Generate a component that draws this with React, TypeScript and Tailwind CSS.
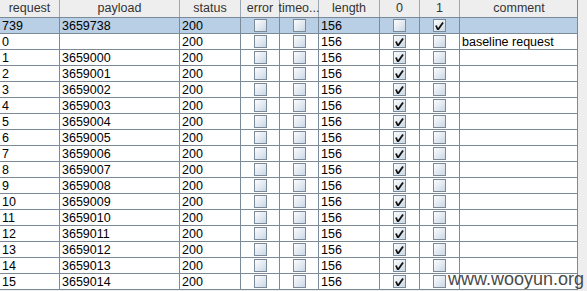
import React from "react";

type Row = {
  request: string;
  payload: string;
  status: string;
  error: boolean;
  timeout: boolean;
  length: string;
  c0: boolean;
  c1: boolean;
  comment: string;
};

const rows: Row[] = [
  { request: "739", payload: "3659738", status: "200", error: false, timeout: false, length: "156", c0: false, c1: true, comment: "" },
  { request: "0", payload: "", status: "200", error: false, timeout: false, length: "156", c0: true, c1: false, comment: "baseline request" },
  ...Array.from({ length: 15 }, (_, i) => ({
    request: String(i + 1),
    payload: String(3659000 + i),
    status: "200",
    error: false,
    timeout: false,
    length: "156",
    c0: true,
    c1: false,
    comment: "",
  })),
];

const headers = ["request", "payload", "status", "error", "timeo...", "length", "0", "1", "comment"];
const widths = ["w-[60px]", "w-[120px]", "w-[61px]", "w-[39px]", "w-[39px]", "w-[61px]", "w-[40px]", "w-[40px]", "w-[118px]"];

function CheckBox({ checked }: { checked: boolean }) {
  return (
    <svg width="13" height="13" viewBox="0 0 13 13">
      <defs>
        <linearGradient id="cbg" x1="0" y1="0" x2="1" y2="1">
          <stop offset="0" stopColor="#ffffff" />
          <stop offset="1" stopColor="#c9d6e4" />
        </linearGradient>
      </defs>
      <rect x="0.5" y="0.5" width="12" height="12" fill="url(#cbg)" stroke="#7a8a99" />
      {checked && (
        <path d="M3 6.5 L4.5 10 L5.5 10 L10 3.5" fill="none" stroke="#111" strokeWidth="1.8" strokeLinejoin="round" />
      )}
    </svg>
  );
}

export default function App() {
  return (
    <div className="relative w-[587px] h-[291px] overflow-hidden bg-[#eeeeee] font-['Liberation_Sans',Arial,sans-serif] text-[12.5px]">
      <div className="w-[578px] border-r border-[#7a8a99]">
        {/* Header */}
        <div className="flex h-[18px] bg-[#eeeeee] border-b border-[#7a8a99]">
          {headers.map((h, i) => (
            <div
              key={h}
              className={`${widths[i]} shrink-0 border-r border-[#9aa6b2] last:border-r-0 flex items-center justify-center text-[#333] leading-none whitespace-nowrap`}
            >
              {h}
            </div>
          ))}
        </div>

        {/* Body */}
        {rows.map((r, idx) => {
          const sel = idx === 0;
          const text = [r.request, r.payload, r.status];
          return (
            <div
              key={idx}
              className={`flex h-[16px] border-b border-[#7a8a99] ${sel ? "bg-[#b8cfe5]" : "bg-white"}`}
            >
              {text.map((t, i) => (
                <div key={i} className={`${widths[i]} shrink-0 border-r border-[#7a8a99] pl-[2px] leading-[16px] text-black whitespace-nowrap`}>
                  {t}
                </div>
              ))}
              <div className="w-[39px] shrink-0 border-r border-[#7a8a99] flex items-center justify-center">
                <CheckBox checked={r.error} />
              </div>
              <div className="w-[39px] shrink-0 border-r border-[#7a8a99] flex items-center justify-center">
                <CheckBox checked={r.timeout} />
              </div>
              <div className="w-[61px] shrink-0 border-r border-[#7a8a99] pl-[2px] leading-[16px] text-black">
                {r.length}
              </div>
              <div className="w-[40px] shrink-0 border-r border-[#7a8a99] flex items-center justify-center">
                <CheckBox checked={r.c0} />
              </div>
              <div className="w-[40px] shrink-0 border-r border-[#7a8a99] flex items-center justify-center">
                <CheckBox checked={r.c1} />
              </div>
              <div className="w-[118px] shrink-0 pl-[2px] leading-[16px] text-black whitespace-nowrap">
                {r.comment}
              </div>
            </div>
          );
        })}
      </div>

      {/* watermark */}
      <div className="absolute left-[448px] top-[268px] text-[18px] leading-[22px] text-[#4a4a4a] whitespace-nowrap">
        www.wooyun.org
      </div>
    </div>
  );
}
